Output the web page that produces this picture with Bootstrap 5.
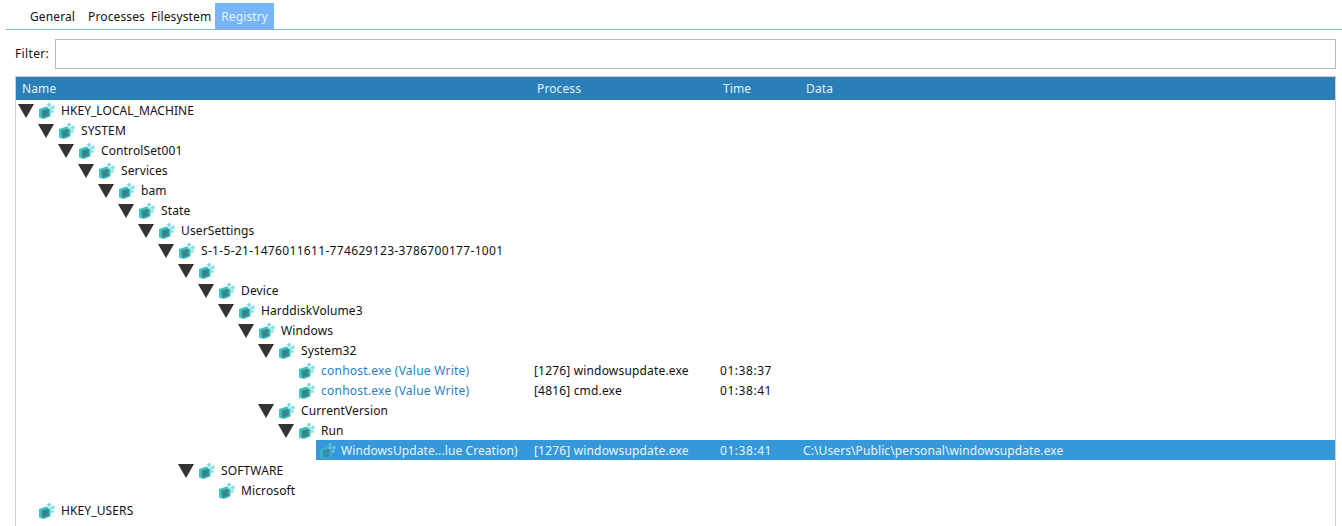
<!DOCTYPE html>
<html lang="en">
<head>
<meta charset="utf-8">
<title>Registry</title>
<link rel="stylesheet" href="https://cdn.jsdelivr.net/npm/bootstrap@5.3.0/dist/css/bootstrap.min.css">
<style>
body{font-family:"Noto Sans","Open Sans",sans-serif;font-size:12px;letter-spacing:.12px;color:#111;background:#fff;height:526px;overflow:hidden}
.tabbar{height:30px;margin-left:6px;border-bottom:1px solid #82b4e6;padding:3px 0 0 16px}
.tabitem{height:26px;line-height:27px;padding:0 8px 0 8px;white-space:nowrap}
.tabitem.tight{padding:0 3px;margin-left:2px}
.tabitem.tight + .tabitem.tight{margin-left:0}
.tabitem.sel{background:#76b5f7;color:#e8f2fd;padding:0 6px;margin-left:1px}
.filterbar{margin:9px 6px 0 15px;height:30px}
.filtertxt{letter-spacing:.35px}
.filterbox{width:1281px;height:30px;border:1px solid #b9b9b9;border-radius:0;padding:0 4px;font-size:12px}
.filterbox:focus{outline:0;box-shadow:none;border-color:#b9b9b9}
.treebox{margin:7px 6px 0 15px;border:1px solid #d0d0d0;border-bottom:0;height:450px}
.treehead{height:23px;line-height:24px;background:#2a7fb8;color:#e6f1f8;padding-left:6px}
.hname{width:515px}.hproc{width:186px}.htime{width:83px}
.trow{height:20px;line-height:18px;padding-top:2px;white-space:nowrap}
.arrow{width:16px;height:14px;margin:0 5px 0 2px;flex:none}
.noarrow{width:23px;flex:none}
.regico{width:16px;height:16px;flex:none;margin-right:6px}
.cellname{flex:none}
.cellproc{width:186px;flex:none;letter-spacing:.17px}
.celltime{width:83px;flex:none;letter-spacing:.55px}
.lnk{color:#2a7fc4;letter-spacing:.24px}
.sidtxt{letter-spacing:.33px}
.captxt{letter-spacing:.05px}
.sel-row{background:#3498db;color:#eaf5fc}
.sel-row .regico{opacity:.55;margin-right:5px}
.seltxt{letter-spacing:.09px}
.datatxt{letter-spacing:.1px}
</style>
</head>
<body>
<svg width="0" height="0" class="d-block" aria-hidden="true">
<symbol id="tri" viewBox="0 0 16 14"><path d="M0 0H16L8 14Z" fill="#333"/></symbol>
<symbol id="cube" viewBox="0 0 16 16">
<path d="M0 6 7.5 3.6 11.6 5V13.2L5 16 0 14.4Z" fill="#3cc4be"/>
<path d="M2.6 7.4 10 5.2V12.9L2.6 15.2Z" fill="#4a9da0"/>
<path d="M3 9.2 9.8 7.2M3 11.2 9.8 9.2M3 13.2 9.8 11.2M5 7V14.6M7.4 6.2V14" stroke="#2f7d82" stroke-width=".9" fill="none"/>
<circle cx="10" cy="1.8" r="1.8" fill="#74d8d8"/><circle cx="13.8" cy="4.4" r="2" fill="#86e0e0"/><circle cx="10" cy="4.8" r="1.3" fill="#a6e9e9"/><circle cx="13.2" cy="8.4" r="1.6" fill="#8ae2e2"/>
</symbol>
</svg>

<div class="tabbar d-flex">
<div class="tabitem">General</div>
<div class="tabitem tight">Processes</div>
<div class="tabitem tight">Filesystem</div>
<div class="tabitem sel">Registry</div>
</div>

<div class="filterbar d-flex align-items-center">
<label class="flex-grow-1 filtertxt" for="flt">Filter:</label>
<input id="flt" class="filterbox" type="text">
</div>

<div class="treebox">
<div class="treehead d-flex"><div class="hname">Name</div><div class="hproc">Process</div><div class="htime">Time</div><div>Data</div></div>
<div>
<div class="trow d-flex align-items-center" style="margin-left:0"><svg class="arrow"><use href="#tri"/></svg><svg class="regico"><use href="#cube"/></svg><span class="captxt">HKEY_LOCAL_MACHINE</span></div>
<div class="trow d-flex align-items-center" style="margin-left:20px"><svg class="arrow"><use href="#tri"/></svg><svg class="regico"><use href="#cube"/></svg>SYSTEM</div>
<div class="trow d-flex align-items-center" style="margin-left:40px"><svg class="arrow"><use href="#tri"/></svg><svg class="regico"><use href="#cube"/></svg>ControlSet001</div>
<div class="trow d-flex align-items-center" style="margin-left:60px"><svg class="arrow"><use href="#tri"/></svg><svg class="regico"><use href="#cube"/></svg>Services</div>
<div class="trow d-flex align-items-center" style="margin-left:80px"><svg class="arrow"><use href="#tri"/></svg><svg class="regico"><use href="#cube"/></svg>bam</div>
<div class="trow d-flex align-items-center" style="margin-left:100px"><svg class="arrow"><use href="#tri"/></svg><svg class="regico"><use href="#cube"/></svg>State</div>
<div class="trow d-flex align-items-center" style="margin-left:120px"><svg class="arrow"><use href="#tri"/></svg><svg class="regico"><use href="#cube"/></svg>UserSettings</div>
<div class="trow d-flex align-items-center" style="margin-left:140px"><svg class="arrow"><use href="#tri"/></svg><svg class="regico"><use href="#cube"/></svg><span class="sidtxt">S-1-5-21-1476011611-774629123-3786700177-1001</span></div>
<div class="trow d-flex align-items-center" style="margin-left:160px"><svg class="arrow"><use href="#tri"/></svg><svg class="regico"><use href="#cube"/></svg></div>
<div class="trow d-flex align-items-center" style="margin-left:180px"><svg class="arrow"><use href="#tri"/></svg><svg class="regico"><use href="#cube"/></svg>Device</div>
<div class="trow d-flex align-items-center" style="margin-left:200px"><svg class="arrow"><use href="#tri"/></svg><svg class="regico"><use href="#cube"/></svg>HarddiskVolume3</div>
<div class="trow d-flex align-items-center" style="margin-left:220px"><svg class="arrow"><use href="#tri"/></svg><svg class="regico"><use href="#cube"/></svg>Windows</div>
<div class="trow d-flex align-items-center" style="margin-left:240px"><svg class="arrow"><use href="#tri"/></svg><svg class="regico"><use href="#cube"/></svg>System32</div>
<div class="trow d-flex align-items-center" style="margin-left:260px"><div class="noarrow"></div><div class="cellname d-flex align-items-center" style="width:235px"><svg class="regico"><use href="#cube"/></svg><span class="lnk">conhost.exe (Value Write)</span></div><div class="cellproc">[1276] windowsupdate.exe</div><div class="celltime">01:38:37</div></div>
<div class="trow d-flex align-items-center" style="margin-left:260px"><div class="noarrow"></div><div class="cellname d-flex align-items-center" style="width:235px"><svg class="regico"><use href="#cube"/></svg><span class="lnk">conhost.exe (Value Write)</span></div><div class="cellproc">[4816] cmd.exe</div><div class="celltime">01:38:41</div></div>
<div class="trow d-flex align-items-center" style="margin-left:240px"><svg class="arrow"><use href="#tri"/></svg><svg class="regico"><use href="#cube"/></svg>CurrentVersion</div>
<div class="trow d-flex align-items-center" style="margin-left:260px"><svg class="arrow"><use href="#tri"/></svg><svg class="regico"><use href="#cube"/></svg>Run</div>
<div class="trow sel-row d-flex align-items-center" style="margin-left:300px"><div class="cellname d-flex align-items-center" style="width:218px"><svg class="regico ms-1"><use href="#cube"/></svg><span class="seltxt">WindowsUpdate...lue Creation)</span></div><div class="cellproc">[1276] windowsupdate.exe</div><div class="celltime">01:38:41</div><div class="datatxt">C:\Users\Public\personal\windowsupdate.exe</div></div>
<div class="trow d-flex align-items-center" style="margin-left:160px"><svg class="arrow"><use href="#tri"/></svg><svg class="regico"><use href="#cube"/></svg>SOFTWARE</div>
<div class="trow d-flex align-items-center" style="margin-left:180px"><div class="noarrow"></div><svg class="regico"><use href="#cube"/></svg>Microsoft</div>
<div class="trow d-flex align-items-center" style="margin-left:0"><div class="noarrow"></div><svg class="regico"><use href="#cube"/></svg>HKEY_USERS</div>
</div>
</div>
<script src="https://cdn.jsdelivr.net/npm/bootstrap@5.3.0/dist/js/bootstrap.bundle.min.js"></script>
</body>
</html>
